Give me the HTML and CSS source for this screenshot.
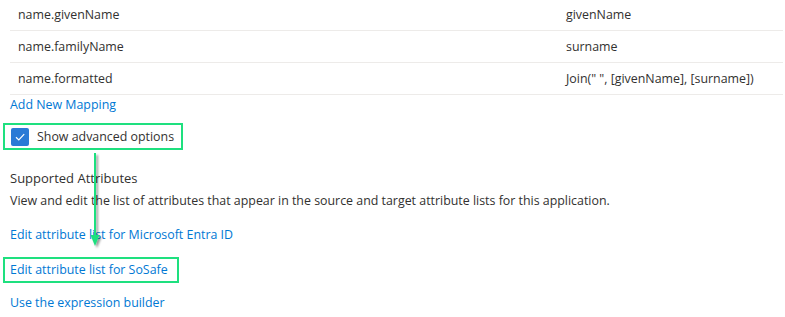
FILE: index.html
```html
<!DOCTYPE html>
<html lang="en">

<head>
    <meta charset="UTF-8">
    <title>Attribute mapping</title>
    <link rel="stylesheet" href="styles.css">
</head>

<body>
    <div class="page">
        <div class="mappings">
            <div class="mapping-row">
                <div class="cell cell-source">name.givenName</div>
                <div class="cell">givenName</div>
            </div>
            <div class="mapping-row">
                <div class="cell cell-source">name.familyName</div>
                <div class="cell">surname</div>
            </div>
            <div class="mapping-row">
                <div class="cell cell-source">name.formatted</div>
                <div class="cell">Join(" ", [givenName], [surname])</div>
            </div>
        </div>

        <a href="#" class="link add-link">Add New Mapping</a>

        <div class="highlight highlight-check">
            <label class="checkbox">
                <span class="checkbox-box">
                    <svg width="12" height="12" viewBox="0 0 12 12">
                        <path d="M2 6.3 L4.8 9 L10.2 3.2" fill="none" stroke="#fff" stroke-width="1.2" />
                    </svg>
                </span>
                Show advanced options
            </label>
        </div>

        <div class="attributes">
            <h3>Supported Attributes</h3>
            <p>View and edit the list of attributes that appear in the source and target attribute lists for this application.</p>
        </div>

        <div class="attr-links">
            <a href="#" class="link">Edit attribute list for Microsoft Entra ID</a>
            <div class="highlight highlight-link">
                <a href="#" class="link">Edit attribute list for SoSafe</a>
            </div>
            <a href="#" class="link">Use the expression builder</a>
        </div>

        <!-- annotation arrow -->
        <svg class="arrow" width="20" height="100" viewBox="0 0 20 100">
            <defs>
                <filter id="shadow" x="-50%" y="-10%" width="200%" height="130%">
                    <feDropShadow dx="2" dy="2" stdDeviation="1.3" flood-color="#000" flood-opacity="0.4" />
                </filter>
            </defs>
            <g filter="url(#shadow)">
                <line x1="7" y1="0" x2="7" y2="84" stroke="#1ee07f" stroke-width="2" />
                <path d="M2.5 82 L11.5 82 L7 93 Z" fill="#1ee07f" />
            </g>
        </svg>
    </div>
</body>

</html>
```

FILE: styles.css
```css
:root {
    --text: #323130;
    --link: #0078d4;
    --border: #edebe9;
    --accent: #1ee07f;
}

* {
    box-sizing: border-box;
    margin: 0;
    padding: 0;
}

body {
    font-family: 'Segoe UI', 'Open Sans', 'Noto Sans', sans-serif;
    font-size: 12.4px;
    color: var(--text);
    background: #fff;
}

.page {
    position: relative;
    padding: 0 2px 0 10px;
    margin-top: -1px;
}

.mapping-row {
    display: flex;
    align-items: center;
    height: 32px;
    border-bottom: 1px solid var(--border);
}

.cell {
    padding-left: 8px;
    white-space: nowrap;
}

.cell-source {
    flex: none;
    width: 548px;
}

.link {
    color: var(--link);
    text-decoration: none;
    white-space: nowrap;
}

.add-link {
    display: block;
    line-height: 19px;
}

.highlight {
    border: 2px solid var(--accent);
    display: inline-flex;
    align-items: center;
    margin-left: -7px;
}

.highlight-check {
    margin-top: 9px;
    height: 27px;
    width: 180px;
    padding-left: 6px;
}

.checkbox {
    display: flex;
    align-items: center;
    gap: 8px;
    white-space: nowrap;
}

.checkbox-box {
    width: 18px;
    height: 18px;
    border-radius: 2px;
    background: #2a7ad6;
    display: flex;
    align-items: center;
    justify-content: center;
}

.attributes {
    margin-top: 18px;
}

.attributes h3 {
    font-size: 13px;
    font-weight: 400;
    line-height: 20px;
}

.attributes p {
    margin-top: 3px;
    line-height: 20px;
}

.attr-links {
    display: flex;
    flex-direction: column;
    align-items: flex-start;
    margin-top: 14px;
}

.attr-links .link {
    line-height: 20px;
}

.highlight-link {
    margin-top: 12px;
    height: 26px;
    width: 176px;
    padding-left: 5px;
}

.attr-links > .link:last-child {
    margin-top: 10px;
}

.arrow {
    position: absolute;
    left: 88px;
    top: 154px;
}
```
